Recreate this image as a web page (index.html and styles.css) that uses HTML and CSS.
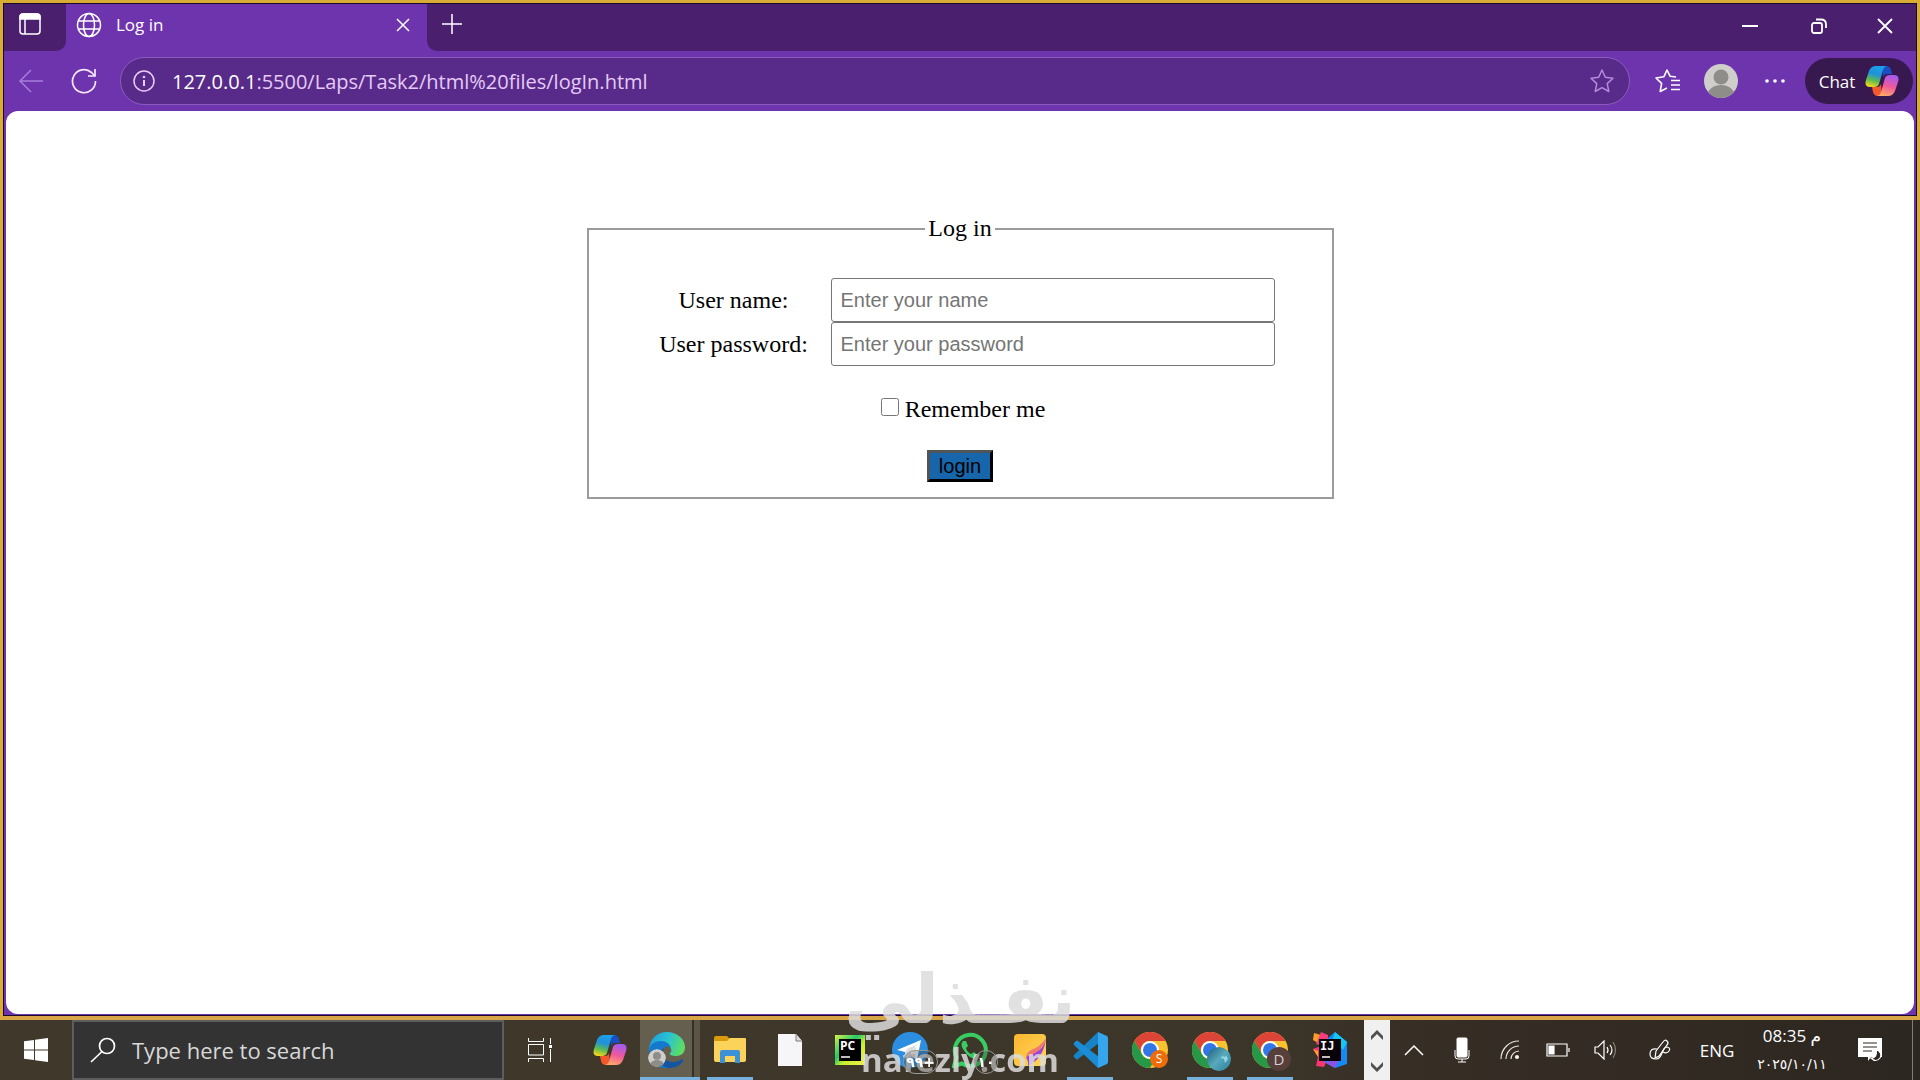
FILE: index.html
```html
<!DOCTYPE html>
<html lang="en">
<head>
    <meta charset="UTF-8">
    <meta name="viewport" content="width=device-width, initial-scale=1.0">
    <title>Log in</title>
    <link rel="stylesheet" href="styles.css">
</head>
<body>
    <!-- shared icons -->
    <svg class="defs" width="0" height="0" aria-hidden="true">
        <defs>
            <linearGradient id="cpLeft" x1="0.6" y1="0" x2="0.3" y2="1">
                <stop offset="0" stop-color="#1ba0ee"/>
                <stop offset="0.4" stop-color="#1f92d8"/>
                <stop offset="0.7" stop-color="#5cbb52"/>
                <stop offset="1" stop-color="#f2d81c"/>
            </linearGradient>
            <linearGradient id="cpRight" x1="0.6" y1="0" x2="0.3" y2="1">
                <stop offset="0" stop-color="#a45bf0"/>
                <stop offset="0.5" stop-color="#f0589a"/>
                <stop offset="1" stop-color="#ffac66"/>
            </linearGradient>
            <linearGradient id="edgeTop" x1="0" y1="0.3" x2="1" y2="0.6">
                <stop offset="0" stop-color="#1b9fe0"/>
                <stop offset="0.5" stop-color="#2cc4cf"/>
                <stop offset="1" stop-color="#5fe05a"/>
            </linearGradient>
            <linearGradient id="yellowApp" x1="0" y1="0" x2="1" y2="1">
                <stop offset="0" stop-color="#fbb62f"/>
                <stop offset="1" stop-color="#ffd75a"/>
            </linearGradient>
            <linearGradient id="pcEdge" x1="0" y1="0" x2="1" y2="1">
                <stop offset="0" stop-color="#d7f04a"/>
                <stop offset="0.4" stop-color="#23c96a"/>
                <stop offset="0.6" stop-color="#c6ef2b"/>
                <stop offset="1" stop-color="#f2f04c"/>
            </linearGradient>
            <linearGradient id="photo" x1="0" y1="0" x2="1" y2="1">
                <stop offset="0" stop-color="#1b5c74"/>
                <stop offset="0.5" stop-color="#58a9bd"/>
                <stop offset="1" stop-color="#2b7f9b"/>
            </linearGradient>
        </defs>
        <symbol id="copilot" viewBox="0 0 34 32">
            <path d="M17 1h4q4 0 5 4l1 4h-5q-3 0-4 3z" fill="#1a4fc4"/>
            <path d="M17 31h-4q-4 0-5-4l-1-5h5q3 0 4-3z" fill="#f4592c"/>
            <path d="M11 1h12q-4 0-5 4l-4 14q-1 3-5 3H5q-6 0-4-7l3-9q2-5 7-5z" fill="url(#cpLeft)"/>
            <path d="M23 31H11q4 0 5-4l4-14q1-3 5-3h4q6 0 4 7l-3 9q-2 5-7 5z" fill="url(#cpRight)"/>
        </symbol>
        <symbol id="person" viewBox="0 0 34 34">
            <circle cx="17" cy="17" r="17" fill="#d0cecb"/>
            <circle cx="17" cy="13" r="7.500" fill="#8f8d8a"/>
            <path d="M4 28q4-7 13-7t13 7q-5 6-13 6t-13-6z" fill="#8f8d8a"/>
        </symbol>
        <symbol id="chrome" viewBox="0 0 36 36">
            <circle cx="18" cy="18" r="18" fill="#f9c22e"/>
            <path d="M2.400 9A18 18 0 0 1 33.600 9H18a9 9 0 0 0-8 13.500z" fill="#dc4437"/>
            <path d="M2.400 9A18 18 0 0 0 18 36l7.800-13.500a9 9 0 0 1-15.600 0z" fill="#279847"/>
            <circle cx="18" cy="18" r="9" fill="#fff"/>
            <circle cx="18" cy="18" r="7" fill="#3277e6"/>
        </symbol>
    </svg>

    <div class="window">
        <div class="browser">
            <header class="titlebar">
                <button class="tab-actions" aria-label="Tab actions">
                    <svg width="24" height="24" viewBox="0 0 24 24" fill="none" stroke="#fff" stroke-width="1.500">
                        <rect x="2" y="2" width="20" height="20" rx="3"/>
                        <path d="M2 7V5q0-3 3-3h14q3 0 3 3v2z" fill="#fff"/>
                        <path d="M7 7v15"/>
                    </svg>
                </button>
                <div class="tab">
                    <svg width="26" height="26" viewBox="0 0 26 26" fill="none" stroke="#fff" stroke-width="1.500">
                        <circle cx="13" cy="13" r="11.500"/>
                        <ellipse cx="13" cy="13" rx="5.500" ry="11.500"/>
                        <path d="M3 9h20M3 17h20"/>
                    </svg>
                    <span class="tab-title">Log in</span>
                    <button class="tab-close" aria-label="Close tab">
                        <svg width="14" height="14" viewBox="0 0 14 14" stroke="#fff" stroke-width="1.500"><path d="M1 1l12 12M13 1L1 13"/></svg>
                    </button>
                </div>
                <div class="strip">
                    <button class="new-tab" aria-label="New tab">
                        <svg width="22" height="22" viewBox="0 0 22 22" stroke="#fff" stroke-width="1.500"><path d="M11 1v20M1 11h20"/></svg>
                    </button>
                    <div class="window-controls">
                        <button aria-label="Minimize">
                            <svg width="16" height="16" viewBox="0 0 16 16" stroke="#fff" stroke-width="2"><path d="M0 8h16"/></svg>
                        </button>
                        <button aria-label="Restore">
                            <svg width="16" height="16" viewBox="0 0 16 16" fill="none" stroke="#fff" stroke-width="1.800">
                                <rect x="1" y="5" width="10" height="10" rx="2"/>
                                <path d="M5 1.500h5q5 0 5 5V10"/>
                            </svg>
                        </button>
                        <button class="close" aria-label="Close">
                            <svg width="16" height="16" viewBox="0 0 16 16" stroke="#fff" stroke-width="1.800"><path d="M1 1l14 14M15 1L1 15"/></svg>
                        </button>
                    </div>
                </div>
            </header>

            <nav class="toolbar">
                <button class="nav-btn" aria-label="Back">
                    <svg width="26" height="24" viewBox="0 0 26 24" fill="none" stroke="#a77ddb" stroke-width="1.500"><path d="M25 12H2M13 1L2 12l11 11"/></svg>
                </button>
                <button class="nav-btn" aria-label="Refresh">
                    <svg width="26" height="26" viewBox="0 0 26 26" fill="none" stroke="#f6e8ff" stroke-width="1.700">
                        <path d="M24.500 13A11.500 11.500 0 1 1 20.500 4.500L24 8"/>
                        <path d="M24 1v7h-7"/>
                    </svg>
                </button>
                <div class="address">
                    <svg width="22" height="22" viewBox="0 0 22 22" fill="none" stroke="#e8cdfa" stroke-width="1.500">
                        <circle cx="11" cy="11" r="10"/>
                        <path d="M11 10v6" stroke-width="2"/>
                        <circle cx="11" cy="7" r="1.300" fill="#e8cdfa" stroke="none"/>
                    </svg>
                    <a class="url" href="#"><span>127.0.0.1</span>:5500/Laps/Task2/html%20files/logIn.html</a>
                    <button class="favorite" aria-label="Add to favorites">
                        <svg width="26" height="26" viewBox="0 0 26 26" fill="none" stroke="#b48bdc" stroke-width="1.500" stroke-linejoin="round"><path d="M13 2l3.300 7.300 7.700.9-5.800 5.400 1.600 7.900L13 19.600l-6.800 3.900 1.600-7.900L2 10.200l7.700-.9z"/></svg>
                    </button>
                </div>
                <div class="tools">
                    <button aria-label="Favorites">
                        <svg width="26" height="26" viewBox="0 0 26 26" fill="none" stroke="#fff" stroke-width="1.600" stroke-linejoin="round">
                            <path d="M22 9l-5.800-.7L13 2 9.800 8.800 2 10l5.600 5.400L6.200 23.500 13 20"/>
                            <path d="M17 12.500h9M17 17h9M17 21.500h9"/>
                        </svg>
                    </button>
                    <button aria-label="Profile"><svg width="34" height="34"><use href="#person"/></svg></button>
                    <button aria-label="Settings">
                        <svg width="20" height="6" viewBox="0 0 20 6" fill="#fff"><circle cx="2" cy="3" r="1.800"/><circle cx="10" cy="3" r="1.800"/><circle cx="18" cy="3" r="1.800"/></svg>
                    </button>
                </div>
                <button class="chat">Chat <svg width="34" height="32"><use href="#copilot"/></svg></button>
            </nav>

            <main class="page">
                <form class="login-form" onsubmit="return false">
                    <fieldset>
                        <legend>Log in</legend>
                        <div class="fields">
                            <label for="name">User name:</label>
                            <input type="text" id="name" placeholder="Enter your name">
                            <label for="password">User password:</label>
                            <input type="password" id="password" placeholder="Enter your password">
                        </div>
                        <div class="remember">
                            <input type="checkbox" id="remember">
                            <label for="remember">Remember me</label>
                        </div>
                        <button class="login-btn" type="submit">login</button>
                    </fieldset>
                </form>
            </main>
        </div>
    </div>

    <footer class="taskbar">
        <button class="start" aria-label="Start">
            <svg width="24" height="24" viewBox="0 0 24 24" fill="#fff"><path d="M0 3.300L10 2v9.500H0zM11 1.800L24 0v11.500H11zM0 12.500h10V22L0 20.700zM11 12.500h13V24l-13-1.800z"/></svg>
        </button>
        <div class="search">
            <svg width="26" height="26" viewBox="0 0 26 26" fill="none" stroke="#fff" stroke-width="1.700"><circle cx="17" cy="9" r="7.500"/><path d="M12 14.500L1 25"/></svg>
            <input type="text" placeholder="Type here to search" aria-label="Search">
        </div>
        <button class="task-view" aria-label="Task view">
            <svg width="24" height="24" viewBox="0 0 24 24" fill="none" stroke="#fff">
                <path d="M.5 0v3.500h15V0M.5 24v-3.500h15V24M.5 6.500h15v10.500H.5zM22.500 0v6M22.500 11v13"/>
                <path d="M21 7h3v3h-3z" fill="#fff" stroke="none"/>
            </svg>
        </button>

        <div class="apps">
            <button class="app" aria-label="Copilot"><svg width="34" height="32"><use href="#copilot"/></svg></button>
            <button class="app current" aria-label="Edge">
                <svg width="36" height="36" viewBox="0 0 36 36">
                    <path d="M0 17C1 7 8 0 18 0s18 7 18 15c0 6-4 9-9 9-4 0-7-1-6-3 1-1 2-2 1-4-1-3-4-5-8-5-7 0-12 4-14 9z" fill="url(#edgeTop)"/>
                    <path d="M0 18c1-6 6-9 12-9 5 0 9 3 10 7-2-2-5-2-7 0-4 4-3 12 3 16 2 2 5 3 8 3-15 5-26-5-26-17z" fill="#1478cc"/>
                    <path d="M15 16c-4 6 1 14 9 14 4 0 7-2 9-3 1 0 1 1 1 2-3 5-8 7-14 7-9-1-14-13-5-20z" fill="#14559f"/>
                </svg>
                <svg class="badge left" width="18" height="18"><use href="#person"/></svg>
            </button>
            <button class="app open" aria-label="File Explorer">
                <svg width="34" height="30" viewBox="0 0 34 30">
                    <path d="M1 3q0-2 2-2h11l3 3v6H1z" fill="#d99a0b"/>
                    <path d="M1 6h13l3-3h15q1 0 1 1v21q0 2-2 2H3q-2 0-2-2z" fill="#fbd35b"/>
                    <path d="M7 28V17q0-2 2-2h16q2 0 2 2v11h-5v-7H12v7z" fill="#3c92d6"/>
                </svg>
            </button>
            <button class="app" aria-label="Document">
                <svg width="26" height="34" viewBox="0 0 26 34"><path d="M1 1h18l6 7v25H1z" fill="#f6f6f8"/><path d="M19 1v7h6" fill="#ddd" stroke="#7b7b7b"/></svg>
            </button>
            <button class="app" aria-label="PyCharm">
                <svg width="32" height="32" viewBox="0 0 32 32">
                    <path d="M1 1h30v30H1z" fill="url(#pcEdge)"/>
                    <path d="M5 5h22v22H5z" fill="#000"/>
                    <path d="M7 23h9" stroke="#fff" stroke-width="1.500"/>
                    <text class="ide" x="6" y="16">PC</text>
                </svg>
            </button>
            <button class="app" aria-label="Telegram">
                <svg width="36" height="36" viewBox="0 0 36 36">
                    <circle cx="18" cy="18" r="18" fill="#2b8ee0"/>
                    <path d="M5 18L29 8l-4 20-7-5-4 4-1-7z" fill="#fff"/>
                    <path d="M13 20l12-8-9 10-2 5z" fill="#b9d6ee"/>
                </svg>
                <span class="count">٩٩+</span>
            </button>
            <button class="app" aria-label="WhatsApp">
                <svg width="36" height="36" viewBox="0 0 36 36" fill="none">
                    <path d="M2 34l2.500-8.500A15.500 15.500 0 1 1 10 31.500z" stroke="#38cc62" stroke-width="4"/>
                    <path d="M11 9q-3 3 0 8t7 8q5 3 8-1l-4-4-3 2q-4-2-5-6l2-2-2-5z" fill="#38cc62"/>
                </svg>
                <span class="count">١٠</span>
            </button>
            <button class="app" aria-label="Notes">
                <svg width="32" height="32" viewBox="0 0 32 32">
                    <rect width="32" height="32" rx="4" fill="url(#yellowApp)"/>
                    <path d="M32 4q-2 11-11 14-6 2-9 5 3 6 2 9Q30 24 32 4z" fill="#a044d8"/>
                    <path d="M32 4q-6 9-15 12-4 2-5 7 8-3 12-6 6-5 8-13z" fill="#f2796c"/>
                </svg>
            </button>
            <button class="app open" aria-label="Visual Studio Code">
                <svg width="36" height="36" viewBox="0 0 36 36">
                    <path d="M26 0L2 23q-1 1 0 2l2 2q1 1 2 0L27 11z" fill="#1784c8"/>
                    <path d="M26 36L2 13q-1-1 0-2l2-2q1-1 2 0l21 16z" fill="#1b8dd6"/>
                    <path d="M26 0l9 4q1 1 1 2v24q0 1-1 2l-9 4z" fill="#35a5ee"/>
                </svg>
            </button>
            <button class="app" aria-label="Chrome, profile S">
                <svg width="36" height="36"><use href="#chrome"/></svg>
                <span class="badge profile-s">S</span>
            </button>
            <button class="app open" aria-label="Chrome, photo profile">
                <svg width="36" height="36"><use href="#chrome"/></svg>
                <svg class="badge large" viewBox="0 0 24 24"><circle cx="12" cy="12" r="12" fill="url(#photo)"/><path d="M15 9l3 1 1-2 2 4-3 4-1-4-3-1z" fill="#8fd8e0"/></svg>
            </button>
            <button class="app open" aria-label="Chrome, profile D">
                <svg width="36" height="36"><use href="#chrome"/></svg>
                <span class="badge large profile-d">D</span>
            </button>
            <button class="app" aria-label="IntelliJ IDEA">
                <svg width="36" height="36" viewBox="0 0 36 36">
                    <path d="M2 1l7 2-3 8-5-3z" fill="#ff9c2a"/>
                    <path d="M9 0l7 3v12L4 12z" fill="#f93d7c"/>
                    <path d="M1 17l8-3 7 12-4 9-8-1 2-9z" fill="#fb3571"/>
                    <path d="M1 17l5 2v6z" fill="#ff9c2a"/>
                    <path d="M16 6l7-6 12 10v22l-12 4-11-6z" fill="#168af4"/>
                    <path d="M23 0l12 10-4 8-10-11z" fill="#14c8f0"/>
                    <path d="M12 30l11 6 4-8z" fill="#8a53e6"/>
                    <path d="M7 7h22v22H7z" fill="#0a0209"/>
                    <path d="M10 25h8" stroke="#fff" stroke-width="1.500"/>
                    <text class="ide mono" x="8" y="18">IJ</text>
                </svg>
            </button>
        </div>

        <div class="scroller">
            <button aria-label="Scroll up"><svg width="12" height="10" viewBox="0 0 12 10" fill="#505050"><path d="M6 0l6 6v4L6 4 0 10V6z"/></svg></button>
            <button aria-label="Scroll down"><svg width="12" height="10" viewBox="0 0 12 10" fill="#505050"><path d="M6 10l6-6V0L6 6 0 0v4z"/></svg></button>
        </div>

        <div class="tray">
            <button aria-label="Hidden icons"><svg width="20" height="12" viewBox="0 0 20 12" fill="none" stroke="#fff" stroke-width="1.500"><path d="M1 11l9-9 9 9"/></svg></button>
            <button aria-label="Microphone">
                <svg width="16" height="26" viewBox="0 0 16 26" fill="none" stroke="#fff"><rect x="3" y="1" width="10" height="19" rx="1" fill="#fff"/><path d="M1 13v6q0 3 3 3h8q3 0 3-3v-6M8 22v3M4 25h8"/></svg>
            </button>
            <button aria-label="Network">
                <svg width="20" height="20" viewBox="0 0 20 20" fill="none" stroke="#e9e5df" stroke-width="1.200">
                    <path d="M1 19A18 18 0 0 1 19 1M6 19A13 13 0 0 1 19 6M11 19a8 8 0 0 1 8-8"/>
                    <circle cx="17" cy="17" r="1.500" fill="#fff"/>
                </svg>
            </button>
            <button aria-label="Battery">
                <svg width="24" height="14" viewBox="0 0 24 14" fill="none" stroke="#fff" stroke-width="1.200"><path d="M1 1h20v12H1z"/><path d="M3 3h5v8H3z" fill="#fff"/><path d="M23 5v4"/></svg>
            </button>
            <button aria-label="Volume">
                <svg width="24" height="20" viewBox="0 0 24 20" fill="none" stroke="#fff" stroke-width="1.200"><path d="M1 7h3l6-6v18l-6-6H1z"/><path d="M13 7q2 3 0 6M16 5q4 5 0 10"/><path d="M19 2q5 8 0 16" stroke="#857f76"/></svg>
            </button>
            <button class="wide" aria-label="Pen">
                <svg width="22" height="22" viewBox="0 0 22 22" fill="none" stroke="#fff" stroke-width="1.200"><path d="M7 12L14 3q2-3 4-1t0 4l-8 11-4 2z"/><path d="M8 10q-7-1-7 5 0 5 6 5 4 0 6-6t5-6q4 1 2 4t-6 1"/></svg>
            </button>
            <button class="lang">ENG</button>
            <button class="clock"><span dir="ltr">08:35 م</span><span class="date" dir="ltr">٢٠٢٥/١٠/١١</span></button>
            <button class="wide" aria-label="Notifications">
                <svg width="26" height="26" viewBox="0 0 26 26"><path d="M1 1h24v19H14l-3 4v-4H1z" fill="#fff"/><path d="M6 6h14M6 10h14M6 14h9" stroke="#2d2822" stroke-width="1.200"/><path d="M19 12q7 4 4 9-4 5-9 0 7 0 5-9z" fill="#2d2822" stroke="#fff" stroke-width="1.200"/></svg>
            </button>
            <button class="show-desktop" aria-label="Show desktop"></button>
        </div>
    </footer>

    <div class="watermark">
        <span class="brand" lang="ar">نفـذلي</span>
        <span class="site">nafezly.com</span>
    </div>
</body>
</html>
```

FILE: styles.css
```css
* {
    box-sizing: border-box;
}

body {
    margin: 0;
    height: 100vh;
    display: flex;
    flex-direction: column;
    overflow: hidden;
    font-family: "Open Sans", "Noto Sans", sans-serif;
}

button {
    display: flex;
    align-items: center;
    justify-content: center;
    margin: 0;
    padding: 0;
    border: none;
    background: none;
    color: #fff;
    font-family: inherit;
}

.defs {
    position: absolute;
}

/* browser window */
.window {
    flex: 1;
    display: flex;
    padding: 1px;
    border: 3px solid #d9ad35;
    border-bottom: 4px solid #d8a646;
    background: #180a28;
}

.browser {
    flex: 1;
    display: flex;
    flex-direction: column;
    background: #6e34ae;
}

.titlebar {
    display: flex;
    height: 47px;
}

.tab-actions {
    width: 62px;
    padding: 0 10px 8px 0;
    background: #4a1f6e;
    border-bottom-right-radius: 10px;
}

.tab {
    display: flex;
    align-items: center;
    gap: 14px;
    width: 361px;
    padding: 0 17px 6px 10px;
}

.tab-title {
    flex: 1;
    color: #fff;
    font-size: 17px;
}

.strip {
    flex: 1;
    display: flex;
    justify-content: space-between;
    background: #4a1f6e;
    border-bottom-left-radius: 10px;
}

.new-tab {
    width: 50px;
    padding-bottom: 8px;
}

.window-controls {
    display: flex;
}

.window-controls button {
    width: 69px;
    padding-bottom: 3px;
}

.window-controls .close {
    width: 63px;
}

.toolbar {
    display: flex;
    align-items: center;
    height: 60px;
    padding-right: 3px;
}

.nav-btn {
    width: 53px;
}

.address {
    flex: 1;
    display: flex;
    align-items: center;
    height: 48px;
    margin-left: 10px;
    padding: 0 14px 0 12px;
    border: 1px solid #8a5bbd;
    border-radius: 24px;
    background: #582a8a;
}

.url {
    flex: 1;
    margin-left: 17px;
    color: #e5cbf8;
    font-size: 20px;
    text-decoration: none;
}

.url span {
    color: #fff;
}

.tools {
    display: flex;
    margin: 0 3px 0 10px;
}

.tools button {
    width: 54px;
}

.chat {
    gap: 10px;
    width: 108px;
    height: 46px;
    border-radius: 23px;
    background: #371950;
    font-size: 17px;
}

/* login page */
.page {
    flex: 1;
    margin: 0 2px 1px;
    padding: 104px 16px 0;
    border-radius: 12px;
    background: #fff;
    color: #000;
    font-family: "Liberation Serif", "Times New Roman", serif;
    font-size: 24px;
}

.login-form {
    max-width: 747px;
    margin: 0 auto;
    text-align: center;
}

fieldset {
    margin: 0;
    padding: 36px 0 15px;
    border: 2px solid #9b9b9b;
}

legend {
    margin: 0 auto;
    padding: 0 3px;
}

.fields {
    display: grid;
    grid-template-columns: 194px 1fr;
    align-items: center;
    margin: 0 57px 0 48px;
}

.fields input {
    width: 100%;
    height: 44px;
    padding: 0 9px;
    border: 1px solid #767676;
    border-radius: 3px;
    font-family: "Liberation Sans", Arial, sans-serif;
    font-size: 20px;
}

.fields input::placeholder {
    color: #757575;
}

.remember {
    display: flex;
    align-items: center;
    justify-content: center;
    gap: 6px;
    margin: 30px 0 27px;
    padding-left: 6px;
}

.remember input {
    width: 18px;
    height: 18px;
    margin: 0 0 5px;
}

.login-btn {
    width: 66px;
    height: 32px;
    margin: 0 auto;
    border: 3px solid;
    border-color: #50555a #000 #000 #50555a;
    background: #1766ab;
    color: #000;
    font-family: "Liberation Sans", Arial, sans-serif;
    font-size: 20px;
}

/* taskbar */
.taskbar {
    display: flex;
    height: 60px;
    background: linear-gradient(90deg, #40382a, #3c362a 65%, #362d25 75%, #2d2721);
}

.start {
    width: 72px;
}

.search {
    display: flex;
    align-items: center;
    gap: 16px;
    width: 432px;
    padding: 0 16px;
    border: 2px solid #5d5d5d;
    background: #333;
}

.search input {
    flex: 1;
    min-width: 0;
    padding: 0;
    border: none;
    background: none;
    color: #fff;
    font-family: inherit;
    font-size: 22px;
}

.search input::placeholder {
    color: #d8d8d8;
}

.task-view {
    width: 72px;
    margin-right: 4px;
}

.apps {
    display: flex;
}

.app {
    position: relative;
    width: 60px;
}

.app.current {
    background: linear-gradient(90deg, #655f50 52px, #343027 52px, #343027 54px, #5c5546 54px);
    border-bottom: 3px solid #76b1dd;
    padding-right: 6px;
    padding-top: 3px;
}

.app.open::after {
    content: "";
    position: absolute;
    left: 7px;
    right: 7px;
    bottom: 0;
    height: 3px;
    background: #76b1dd;
}

.ide {
    fill: #fff;
    font-family: "Open Sans", sans-serif;
    font-size: 12px;
    font-weight: 700;
}

.ide.mono {
    font-family: "DejaVu Sans Mono", monospace;
}

.badge {
    position: absolute;
    right: 12px;
    bottom: 12px;
    width: 18px;
    height: 18px;
    border-radius: 50%;
    font-size: 12px;
    line-height: 18px;
}

.badge.left {
    left: 8px;
    bottom: 10px;
}

.badge.large {
    right: 9px;
    bottom: 9px;
    width: 24px;
    height: 24px;
    font-size: 15px;
    line-height: 24px;
}

.profile-s {
    background: #ed6c0b;
}

.profile-d {
    background: #573f3b;
    color: #d8cfcb;
}

.count {
    position: absolute;
    right: 2px;
    bottom: 6px;
    z-index: 2;
    min-width: 24px;
    padding: 0 2px;
    border: 1px solid #999;
    border-radius: 12px;
    background: rgba(55, 50, 42, 0.3);
    font-family: "DejaVu Sans", sans-serif;
    font-size: 14px;
    font-weight: 700;
    line-height: 22px;
}

.scroller {
    display: flex;
    flex-direction: column;
    justify-content: space-between;
    width: 26px;
    margin-left: 4px;
    padding: 10px 0 8px;
    background: #f0f0f0;
}

.tray {
    display: flex;
    margin-left: auto;
}

.tray button {
    width: 48px;
}

.tray .wide {
    width: 60px;
}

.tray .lang {
    width: 54px;
    font-size: 17px;
}

.tray .clock {
    flex-direction: column;
    gap: 4px;
    width: 96px;
    font-family: "Open Sans", "DejaVu Sans", sans-serif;
    font-size: 17px;
    line-height: 24px;
}

.tray .date {
    font-family: "DejaVu Sans", sans-serif;
    font-size: 14px;
}

.tray .show-desktop {
    width: 8px;
    margin-left: 12px;
    border-left: 1px solid #817c75;
}

/* site mark over the bottom of the screen */
.watermark {
    position: fixed;
    left: 0;
    right: 0;
    bottom: 0;
    z-index: 1;
    display: flex;
    flex-direction: column;
    align-items: center;
    color: #dcdcdc;
    font-family: "DejaVu Sans", sans-serif;
    font-weight: 700;
    opacity: 0.85;
    pointer-events: none;
}

.brand {
    font-size: 68px;
    line-height: 80px;
}

.site {
    font-family: "Open Sans", sans-serif;
    font-size: 33px;
    line-height: 40px;
}
```
